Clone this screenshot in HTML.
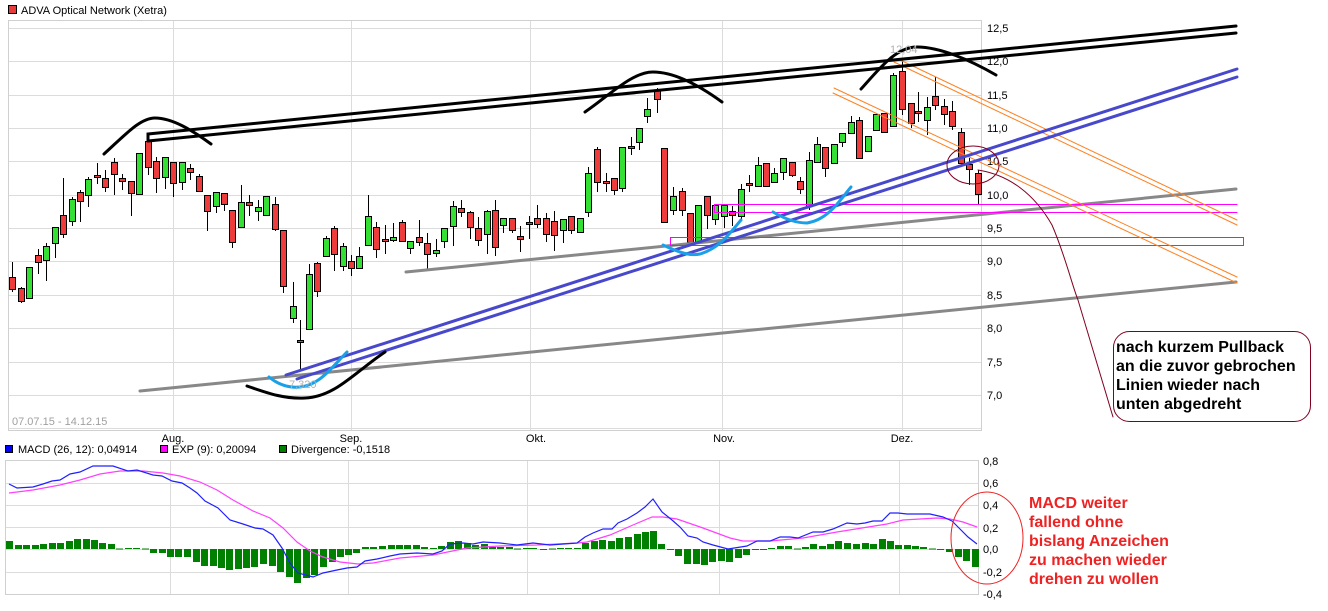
<!DOCTYPE html>
<html><head><meta charset="utf-8">
<style>
html,body{margin:0;padding:0;background:#fff;}
body{width:1328px;height:611px;overflow:hidden;position:relative;font-family:"Liberation Sans",Arial,sans-serif;}
svg{position:absolute;left:0;top:0;}
.t{font-family:"Liberation Sans",Arial,sans-serif;font-size:11px;fill:#000;}
.ann{font-family:"Liberation Sans",Arial,sans-serif;font-size:16px;font-weight:bold;}
</style></head><body>
<svg id="s" width="1328" height="611" xmlns="http://www.w3.org/2000/svg">
<g id="grid"></g>
<rect x="8.5" y="20.5" width="973" height="410" fill="none" stroke="#d0d0d0"/>
<rect x="5.5" y="460.5" width="973" height="134" fill="none" stroke="#d0d0d0"/>
<!-- title -->
<rect x="8.5" y="5.5" width="8" height="8" fill="#e83c3c" stroke="#000"/>
<text class="t" x="21" y="14">ADVA Optical Network (Xetra)</text>
<text class="t" x="12" y="425" fill="#999" style="fill:#a0a0a0">07.07.15 - 14.12.15</text>
<text class="t" x="173" y="442" text-anchor="middle">Aug.</text>
<text class="t" x="351" y="442" text-anchor="middle">Sep.</text>
<text class="t" x="536" y="442" text-anchor="middle">Okt.</text>
<text class="t" x="724" y="442" text-anchor="middle">Nov.</text>
<text class="t" x="902" y="442" text-anchor="middle">Dez.</text>
<!-- y labels -->
<g id="ylab"></g>
<!-- macd legend -->
<rect x="5.5" y="445.5" width="7" height="7" fill="#0000ff" stroke="#000"/>
<text class="t" x="18" y="453">MACD (26, 12): 0,04914</text>
<rect x="160.5" y="445.5" width="7" height="7" fill="#ff00ff" stroke="#000"/>
<text class="t" x="172" y="453">EXP (9): 0,20094</text>
<rect x="279.5" y="445.5" width="7" height="7" fill="#008000" stroke="#000"/>
<text class="t" x="291" y="453">Divergence: -0,1518</text>
<g id="candles"></g>
<g id="macd"></g>
<!-- drawings -->
<g fill="none" stroke-linecap="round">
<!-- gray -->
<line x1="140" y1="391" x2="1236" y2="282" stroke="#888" stroke-width="3"/>
<line x1="406" y1="272" x2="1236" y2="189" stroke="#888" stroke-width="3"/>
<!-- magenta -->
<rect x="670.5" y="237.5" width="573" height="8" stroke="#ff00ff" stroke-width="1"/>
<polyline points="1237,204.5 714.5,204.5 714.5,212.5 1237,212.5" stroke="#ff00ff" stroke-width="1"/>
<!-- orange -->
<line x1="898" y1="59" x2="1237" y2="220" stroke="#ff8020" stroke-width="1"/>
<line x1="894" y1="62" x2="1237" y2="225" stroke="#ff8020" stroke-width="1"/>
<line x1="834" y1="88" x2="1237" y2="277" stroke="#ff8020" stroke-width="1"/>
<line x1="833" y1="93" x2="1237" y2="283" stroke="#ff8020" stroke-width="1"/>
<!-- black channel -->
<polyline points="148,141 148,134 1236,26" stroke="#000" stroke-width="3"/>
<line x1="148" y1="141" x2="1236" y2="33" stroke="#000" stroke-width="3"/>
<!-- blue -->
<line x1="286" y1="375" x2="1237" y2="69" stroke="#4848cc" stroke-width="3"/>
<line x1="297" y1="379" x2="1237" y2="77" stroke="#4848cc" stroke-width="3"/>
<!-- black arcs -->
<path d="M104,154 C125,135 140,118 155,118 C172,118 192,130 211,144" stroke="#000" stroke-width="3"/>
<path d="M585,112 C610,95 632,72 653,72 C675,72 700,86 722,102" stroke="#000" stroke-width="3"/>
<path d="M861,89 C880,68 896,47 917,47 C940,47 970,60 996,75" stroke="#000" stroke-width="3"/>
<path d="M247,386 C270,394 285,399 305,398 C335,397 355,372 385,352" stroke="#000" stroke-width="3"/>
<!-- cyan -->
<path d="M269,377 C280,386 290,388 300,387 C320,385 332,367 347,352" stroke="#1aa0e8" stroke-width="3"/>
<path d="M663,245 C680,253 690,256 700,254 C720,248 730,233 741,220" stroke="#1aa0e8" stroke-width="3"/>
<path d="M773,212 C787,220 797,223 807,223 C828,220 840,200 851,187" stroke="#1aa0e8" stroke-width="3"/>
<!-- dark red ellipse and curve -->
<ellipse cx="973" cy="165" rx="26" ry="19" stroke="#800020" stroke-width="1"/>
<path d="M978,170 C1010,175 1035,195 1052,225 C1065,255 1072,285 1078,300 L1113,417" stroke="#800020" stroke-width="1"/>
<rect x="1113.5" y="331.5" width="197" height="90" rx="16" ry="16" stroke="#800020" stroke-width="1"/>
<ellipse cx="987" cy="538" rx="36" ry="46" stroke="#ee2222" stroke-width="1"/>
</g>
<text class="t" x="890" y="53" style="fill:#b0b0b0">12,04</text>
<text class="t" x="289" y="388" style="fill:#b0b0b0">7,320</text>
<g class="ann" fill="#000">
<text x="1116" y="352">nach kurzem Pullback</text>
<text x="1116" y="371">an die zuvor gebrochen</text>
<text x="1116" y="390">Linien wieder nach</text>
<text x="1116" y="409">unten abgedreht</text>
</g>
<g class="ann" fill="#ee2222">
<text x="1029" y="508">MACD weiter</text>
<text x="1029" y="527">fallend ohne</text>
<text x="1029" y="546">bislang Anzeichen</text>
<text x="1029" y="565">zu machen wieder</text>
<text x="1029" y="584">drehen zu wollen</text>
</g>
</svg>
<script>
var NS="http://www.w3.org/2000/svg";
function el(p,tag,a){var e=document.createElementNS(NS,tag);for(var k in a)e.setAttribute(k,a[k]);p.appendChild(e);return e;}
var g=document.getElementById('grid');
// main horizontal grid
for(var k=0;k<=12;k++){var y=Math.round(28+33.35*k)+0.5;if(y<430)el(g,'line',{x1:9,x2:981,y1:y,y2:y,stroke:'#dcdcdc'});}
[173,351,530,722,902].forEach(function(x){el(g,'line',{x1:x+0.5,x2:x+0.5,y1:21,y2:430,stroke:'#dcdcdc'});});
// macd grid
[483,505,527,549,572].forEach(function(y){el(g,'line',{x1:6,x2:978,y1:y+0.5,y2:y+0.5,stroke:'#dcdcdc'});});
[170,348,527,719,899].forEach(function(x){el(g,'line',{x1:x+0.5,x2:x+0.5,y1:461,y2:594,stroke:'#dcdcdc'});});
// y labels
var yl=document.getElementById('ylab');
var labs=['12,5','12,0','11,5','11,0','10,5','10,0','9,5','9,0','8,5','8,0','7,5','7,0'];
labs.forEach(function(t,i){var e=el(yl,'text',{x:987,y:Math.round(28+33.35*i)+4,'class':'t'});e.textContent=t;});
var ml=['0,8','0,6','0,4','0,2','0,0','-0,2','-0,4'],my=[461,483,505,528,549,572,594];
ml.forEach(function(t,i){var e=el(yl,'text',{x:983,y:my[i]+4,'class':'t'});e.textContent=t;});
// candles
var C=[[12,0,277,289,262,292],[21,0,288,301,287,303],[29,1,267,298,267,299],[38,0,255,262,249,274],[46,1,246,260,243,281],[55,1,227,243,227,258],[63,0,215,234,178,238],[72,1,199,221,197,226],[80,0,192,201,190,222],[88,1,179,195,177,207],[97,0,175,177,163,184],[105,0,178,187,170,192],[114,0,162,174,158,195],[122,0,178,181,174,190],[131,0,181,193,181,216],[139,1,153,194,153,195],[148,0,141,167,134,175],[156,0,161,178,157,193],[165,1,157,177,157,189],[173,0,162,183,162,197],[182,1,162,182,162,190],[190,0,168,172,164,180],[199,0,176,191,174,191],[207,0,195,211,195,231],[216,1,192,206,192,213],[224,0,193,204,193,211],[232,0,210,242,210,248],[241,1,202,227,185,227],[249,0,202,205,195,216],[258,1,207,211,200,221],[266,1,196,215,196,215],[275,0,204,229,197,231],[283,0,230,286,230,293],[293,1,306,318,282,323],[300,0,340,342,320,370],[309,1,274,329,264,329],[317,0,263,291,262,297],[326,1,238,256,236,257],[334,0,228,254,226,271],[343,1,246,266,243,271],[351,0,261,268,255,276],[359,1,256,268,247,268],[368,1,216,245,195,245],[376,0,227,249,222,258],[385,0,239,241,225,254],[393,1,237,240,223,242],[402,0,222,241,220,241],[410,1,241,248,241,254],[419,0,237,242,220,246],[427,0,243,254,233,269],[436,1,250,253,239,257],[444,1,228,241,228,248],[453,1,206,226,201,246],[461,0,208,212,200,217],[470,0,212,227,211,239],[478,0,228,240,217,246],[487,1,211,234,210,254],[495,0,210,247,200,256],[503,1,218,225,218,233],[512,0,218,230,218,233],[520,0,236,239,226,252],[529,0,222,224,216,239],[537,0,218,224,205,228],[546,0,218,234,213,242],[554,0,221,235,211,251],[563,1,219,230,219,243],[571,0,216,230,216,234],[580,1,218,232,218,232],[588,1,173,212,167,217],[597,0,149,182,147,192],[606,0,181,182,173,192],[614,0,178,190,178,195],[622,1,147,188,147,192],[631,0,146,148,137,155],[639,1,128,142,128,150],[647,1,109,116,98,123],[657,0,90,99,88,113],[664,0,148,222,148,222],[673,1,196,210,187,215],[682,0,191,210,188,216],[690,0,213,242,213,243],[698,1,205,242,205,242],[707,0,196,215,196,229],[715,1,205,219,205,225],[724,1,205,216,205,228],[732,0,211,215,206,226],[741,1,189,216,184,220],[749,0,183,184,175,192],[758,1,165,186,157,186],[766,0,163,186,163,186],[774,1,173,182,168,182],[783,1,158,172,158,180],[792,0,162,175,162,177],[800,0,181,189,177,194],[809,1,160,206,152,210],[817,1,144,162,137,162],[825,0,147,168,147,177],[834,1,144,163,144,164],[842,1,133,142,133,147],[851,1,122,133,116,133],[859,0,120,158,117,158],[868,1,136,151,136,151],[876,1,114,130,114,130],[884,0,113,132,113,133],[893,1,75,126,73,126],[902,0,71,109,60,115],[911,0,103,123,103,128],[918,0,111,113,92,122],[927,1,107,120,97,135],[935,0,96,105,77,110],[944,0,106,114,99,125],[952,0,111,126,101,130],[961,0,132,163,128,165],[969,0,164,169,158,185],[978,0,173,194,170,205]];
var cg=document.getElementById('candles');
C.forEach(function(c){
 el(cg,'line',{x1:c[0]+0.5,x2:c[0]+0.5,y1:c[4],y2:c[5],stroke:'#000','stroke-width':1});
 var h=Math.max(c[3]-c[2],2);
 el(cg,'rect',{x:c[0]-2.5,y:c[2]+0.5,width:6,height:h,fill:c[1]?'#33e033':'#ee3c3c',stroke:'#000','stroke-width':1});
});
// divergence bars [x, y]
var D=[[9,541],[18,545],[26,545],[35,545],[43,544],[52,543],[60,543],[69,541],[77,539],[86,539],[94,540],[102,543],[111,544],[119,549],[128,548],[136,548],[145,549],[153,553],[162,553],[170,557],[178,557],[187,557],[196,562],[204,566],[213,566],[221,568],[229,570],[238,569],[246,568],[254,567],[263,564],[272,566],[280,572],[289,577],[297,583],[306,578],[314,575],[323,567],[332,562],[340,557],[348,555],[356,553],[365,547],[373,547],[382,546],[391,545],[399,545],[407,545],[416,545],[424,547],[433,548],[441,546],[450,542],[458,541],[467,543],[475,545],[484,544],[492,547],[500,547],[509,547],[517,549],[526,548],[533,548],[543,550],[552,549],[560,548],[568,548],[577,548],[585,543],[594,541],[602,540],[611,541],[619,538],[628,537],[637,534],[645,532],[653,531],[661,544],[670,550],[678,556],[687,564],[696,564],[704,565],[712,562],[721,561],[729,562],[738,558],[746,555],[755,550],[763,550],[771,548],[780,546],[788,546],[797,549],[805,547],[813,544],[822,546],[830,544],[838,541],[847,543],[856,544],[865,543],[873,544],[882,539],[890,541],[898,545],[907,545],[915,546],[923,547],[932,549],[940,550],[949,552],[958,557],[966,561],[975,567]];
var mg=document.getElementById('macd');
D.forEach(function(d){var y0=549,t=Math.min(d[1],y0),b=Math.max(d[1],y0);if(b-t<1){t=548.5;b=549.5;}
 el(mg,'rect',{x:d[0]-3,y:t,width:7,height:b-t,fill:'#008000'});});
var EXP="9,493 33,490 60,485 80,480 100,474 120,471 143,471 163,473 180,476 200,482 217,490 233,500 253,511 270,518 283,528 297,542 310,551 323,557 340,562 358,564 373,563 400,558 433,555 467,548 500,546 537,545 577,543 587,542 610,535 633,525 652,517 663,517 677,519 703,528 730,538 743,541 770,541 803,538 837,532 887,524 903,520 937,518 950,519 963,522 977,527";
var MACD="9,484 17,488 33,487 43,484 52,481 60,480 70,474 80,472 93,466 113,466 128,471 137,470 153,475 162,476 172,481 182,483 190,488 197,493 205,501 218,508 230,520 243,524 255,528 263,529 273,535 282,548 290,563 298,573 313,577 323,573 337,570 347,568 357,567 365,561 377,559 390,556 400,554 417,553 433,554 442,551 450,544 463,543 473,544 483,542 500,543 517,545 533,543 550,545 577,543 585,537 593,533 603,529 612,529 618,523 627,519 637,513 645,507 653,499 662,512 672,520 680,527 688,536 697,538 703,542 713,545 728,549 747,546 757,541 770,541 780,537 790,537 798,538 813,532 823,532 833,529 847,523 857,524 865,523 873,521 882,521 890,513 898,513 907,514 930,514 943,517 952,521 960,529 968,537 977,544";
el(mg,'polyline',{points:EXP,fill:'none',stroke:'#ff40ff','stroke-width':1.2});
el(mg,'polyline',{points:MACD,fill:'none',stroke:'#2020ff','stroke-width':1.2});
</script>
</body></html>
